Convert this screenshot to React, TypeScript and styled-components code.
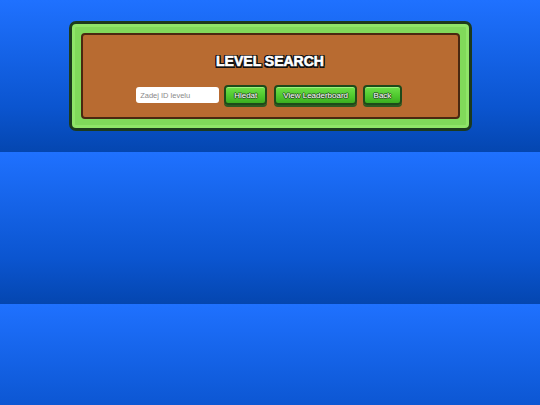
import React from 'react';
import styled, { createGlobalStyle } from 'styled-components';

const GlobalStyle = createGlobalStyle`
  body {
    margin: 8px;
    font-family: "Liberation Sans", Arial, sans-serif;
    background: linear-gradient(to bottom, #1f71ff 0%, #0b55d0 70%, #0446b0 100%);
  }
`;

const Page = styled.div`
  padding: 13px 0;
`;

const Frame = styled.div`
  width: 379px;
  margin: 0 auto;
  padding: 9px;
  border: 3px solid #1c3a1d;
  border-radius: 7px;
  background: #80d95a;
  box-shadow: inset 0 0 0 3px #8fe468;
`;

const Board = styled.div`
  display: flex;
  flex-direction: column;
  align-items: center;
  gap: 15px;
  padding: 18px 0 12px;
  border: 2px solid #4a2810;
  border-radius: 4px;
  background: #b86b31;
`;

const Title = styled.h1`
  margin: 0;
  font-family: "Liberation Sans", Arial, sans-serif;
  font-size: 14px;
  line-height: 17px;
  font-weight: 900;
  color: #fff;
  -webkit-text-stroke: 0.6px #fff;
  text-shadow:
    -1.5px -1.5px 0 #111, 1.5px -1.5px 0 #111, -1.5px 1.5px 0 #111, 1.5px 1.5px 0 #111,
    0 -1.5px 0 #111, 0 1.5px 0 #111, -1.5px 0 0 #111, 1.5px 0 0 #111;
`;

const Row = styled.div`
  display: flex;
  align-items: center;
  margin-right: 2px;
`;

const Input = styled.input`
  box-sizing: border-box;
  width: 83px;
  height: 16px;
  margin-right: 5px;
  padding: 0 4px;
  border: none;
  border-radius: 3px;
  background: #fff;
  font-family: "Liberation Sans", Arial, sans-serif;
  font-size: 7.5px;
  outline: none;

  &::placeholder {
    color: #8a8a8a;
  }
`;

const GameButton = styled.button<{ $gap?: number; $pad?: number }>`
  box-sizing: border-box;
  height: 20px;
  margin-right: ${(p) => p.$gap ?? 0}px;
  padding: 0 ${(p) => p.$pad ?? 7}px;
  border: 2px solid #1d4a1a;
  border-radius: 4px;
  background: linear-gradient(to bottom, #6ee04a 0%, #4fc92e 55%, #3aae20 100%);
  box-shadow: 0 2px 0 #2a5a22, inset 0 1px 0 #9df27c;
  font-family: "Liberation Sans", Arial, sans-serif;
  font-size: 8px;
  color: #fff;
  text-shadow:
    -1px 0 0 #2b4a28, 1px 0 0 #2b4a28, 0 -1px 0 #2b4a28, 0 1px 0 #2b4a28;
  cursor: pointer;
`;

export default function App() {
  return (
    <>
      <GlobalStyle />
      <Page>
        <Frame>
          <Board>
            <Title>LEVEL SEARCH</Title>
            <Row>
              <Input placeholder="Zadej ID levelu" />
              <GameButton $gap={7} $pad={8}>Hledat</GameButton>
              <GameButton $gap={6}>View Leaderboard</GameButton>
              <GameButton $pad={8.5}>Back</GameButton>
            </Row>
          </Board>
        </Frame>
      </Page>
    </>
  );
}
